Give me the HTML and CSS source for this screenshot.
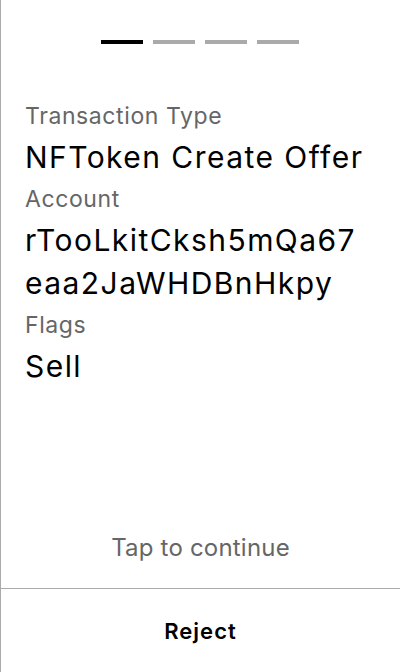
FILE: index.html
```html
<!DOCTYPE html>
<html lang="en">
<head>
<meta charset="utf-8">
<link rel="stylesheet" href="styles.css">
</head>
<body>
<div class="screen">
  <div class="steps">
    <span class="step active"></span>
    <span class="step"></span>
    <span class="step"></span>
    <span class="step"></span>
  </div>
  <div class="fields">
    <div class="field">
      <div class="label">Transaction Type</div>
      <div class="value">NFToken Create Offer</div>
    </div>
    <div class="field">
      <div class="label">Account</div>
      <div class="value">rTooLkitCksh5mQa67<br>eaa2JaWHDBnHkpy</div>
    </div>
    <div class="field">
      <div class="label">Flags</div>
      <div class="value">Sell</div>
    </div>
  </div>
  <div class="hint">Tap to continue</div>
  <div class="footer">
    <span class="reject">Reject</span>
  </div>
</div>
</body>
</html>
```
FILE: styles.css
```css
html, body {
  margin: 0;
  padding: 0;
  background: #fff;
}
body {
  font-family: Inter, "Noto Sans", sans-serif;
  color: #000;
}
.screen {
  height: 672px;
  box-sizing: border-box;
  border-left: 1px solid #aaa;
  display: flex;
  flex-direction: column;
}
.steps {
  display: flex;
  justify-content: center;
  gap: 10px;
  padding-top: 40px;
  padding-right: 1px;
}
.step {
  width: 42px;
  height: 4px;
  background: #aaa;
}
.step.active {
  background: #000;
}
.fields {
  flex: 1;
  padding: 57px 20px 0 24px;
  display: flex;
  flex-direction: column;
  gap: 5.5px;
}
.label {
  font-size: 23px;
  line-height: 30px;
  letter-spacing: 0.6px;
  color: #666;
  margin-bottom: 4.5px;
}
.value {
  font-size: 30px;
  line-height: 43px;
  letter-spacing: 1.45px;
}
.hint {
  text-align: center;
  font-size: 24px;
  line-height: 33px;
  letter-spacing: 0.2px;
  color: #666;
  padding-bottom: 24px;
}
.footer {
  border-top: 1px solid #aaa;
  height: 84px;
  box-sizing: border-box;
  padding-top: 26px;
  display: flex;
  justify-content: center;
  align-items: flex-start;
}
.reject {
  font-size: 22px;
  font-weight: 600;
  line-height: 33px;
  letter-spacing: 1px;
}
```
